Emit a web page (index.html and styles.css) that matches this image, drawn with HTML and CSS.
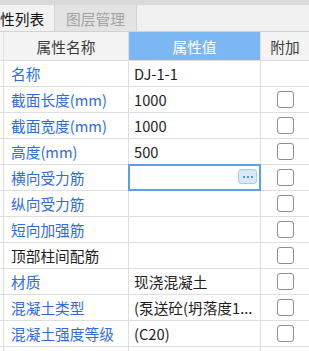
FILE: index.html
```html
<!DOCTYPE html>
<html lang="zh">
<head>
<meta charset="utf-8">
<link rel="stylesheet" href="styles.css">
</head>
<body>
<div class="panel">
  <div class="tabbar">
    <div class="tab active">性列表</div>
    <div class="tab">图层管理</div>
    <div class="tab-fill"></div>
  </div>
  <div class="grid">
    <div class="hd gutter"></div>
    <div class="hd">属性名称</div>
    <div class="hd hd-sel">属性值</div>
    <div class="hd">附加</div>

    <div class="gutter"></div><div class="name">名称</div><div class="val">DJ-1-1</div><div class="ext"></div>
    <div class="gutter"></div><div class="name">截面长度(mm)</div><div class="val">1000</div><div class="ext"><span class="cb"></span></div>
    <div class="gutter"></div><div class="name">截面宽度(mm)</div><div class="val">1000</div><div class="ext"><span class="cb"></span></div>
    <div class="gutter"></div><div class="name">高度(mm)</div><div class="val">500</div><div class="ext"><span class="cb"></span></div>
    <div class="gutter"></div><div class="name">横向受力筋</div><div class="val editing"><span class="dots"><i></i><i></i><i></i></span></div><div class="ext"><span class="cb"></span></div>
    <div class="gutter"></div><div class="name">纵向受力筋</div><div class="val"></div><div class="ext"><span class="cb"></span></div>
    <div class="gutter"></div><div class="name">短向加强筋</div><div class="val"></div><div class="ext"><span class="cb"></span></div>
    <div class="gutter"></div><div class="name plain">顶部柱间配筋</div><div class="val"></div><div class="ext"><span class="cb"></span></div>
    <div class="gutter"></div><div class="name">材质</div><div class="val">现浇混凝土</div><div class="ext"><span class="cb"></span></div>
    <div class="gutter"></div><div class="name">混凝土类型</div><div class="val">(泵送砼(坍落度1...</div><div class="ext"><span class="cb"></span></div>
    <div class="gutter"></div><div class="name">混凝土强度等级</div><div class="val">(C20)</div><div class="ext"><span class="cb"></span></div>
    <div class="gutter"></div><div class="name"></div><div class="val"></div><div class="ext"></div>
  </div>
</div>
</body>
</html>
```

FILE: styles.css
```css
html, body {
  margin: 0;
  padding: 0;
  background: #ffffff;
}
body {
  width: 309px;
  height: 351px;
  overflow: hidden;
  font-family: "Noto Sans CJK SC", "Noto Sans", sans-serif;
  font-size: 14.7px;
  color: #1e1e1e;
}
.panel {
  width: 309px;
  height: 351px;
  overflow: hidden;
}
.tabbar {
  display: flex;
  height: 26px;
  border-top: 5px solid #d9d9d9;
  border-bottom: 1px solid #d2d2d2;
  background: #f0f0f0;
}
.tab {
  display: flex;
  align-items: center;
  height: 26px;
  padding: 0 11px;
  background: #e3e3e3;
  color: #a2a2a2;
  border-right: 1px solid #d4d4d4;
  white-space: nowrap;
}
.tab.active {
  padding: 0 10px 0 0;
  background: #f2f2f2;
  color: #111111;
}
.tab-fill {
  flex: 1;
}
.grid {
  display: grid;
  grid-template-columns: 3px 124px 131px 48px;
  grid-template-rows: 28px;
  grid-auto-rows: 25px;
  gap: 1px;
  background: #dedede;
  border-bottom: 1px solid #dedede;
}
.grid > div {
  display: flex;
  align-items: center;
  background: #ffffff;
  min-width: 0;
}
.hd {
  justify-content: center;
  background: #f3f3f3 !important;
  color: #3a3a3a;
}
.hd.gutter {
  background: #f6f6f6 !important;
}
.hd-sel {
  background: #7ab7f3 !important;
  color: #ffffff;
}
.name {
  padding-left: 7px;
  color: #2f6be0;
  white-space: nowrap;
}
.name.plain {
  color: #1e1e1e;
}
.val {
  padding: 0 5px;
  white-space: nowrap;
  overflow: hidden;
}
.val.editing {
  position: relative;
  overflow: visible;
  outline: 2px solid #5c9fec;
  outline-offset: -1px;
  z-index: 1;
}
.dots {
  position: absolute;
  right: 3px;
  top: 4px;
  width: 19px;
  height: 15px;
  box-sizing: border-box;
  border: 1px solid #a9caee;
  border-radius: 3px;
  background: #dae9f9;
  display: flex;
  align-items: center;
  justify-content: center;
  gap: 2px;
}
.dots i {
  width: 2px;
  height: 2px;
  background: #5a97dd;
  display: block;
}
.ext {
  justify-content: center;
}
.cb {
  width: 17px;
  height: 17px;
  box-sizing: border-box;
  border: 1.5px solid #8e8e8e;
  border-radius: 3px;
  background: #ffffff;
}
```
